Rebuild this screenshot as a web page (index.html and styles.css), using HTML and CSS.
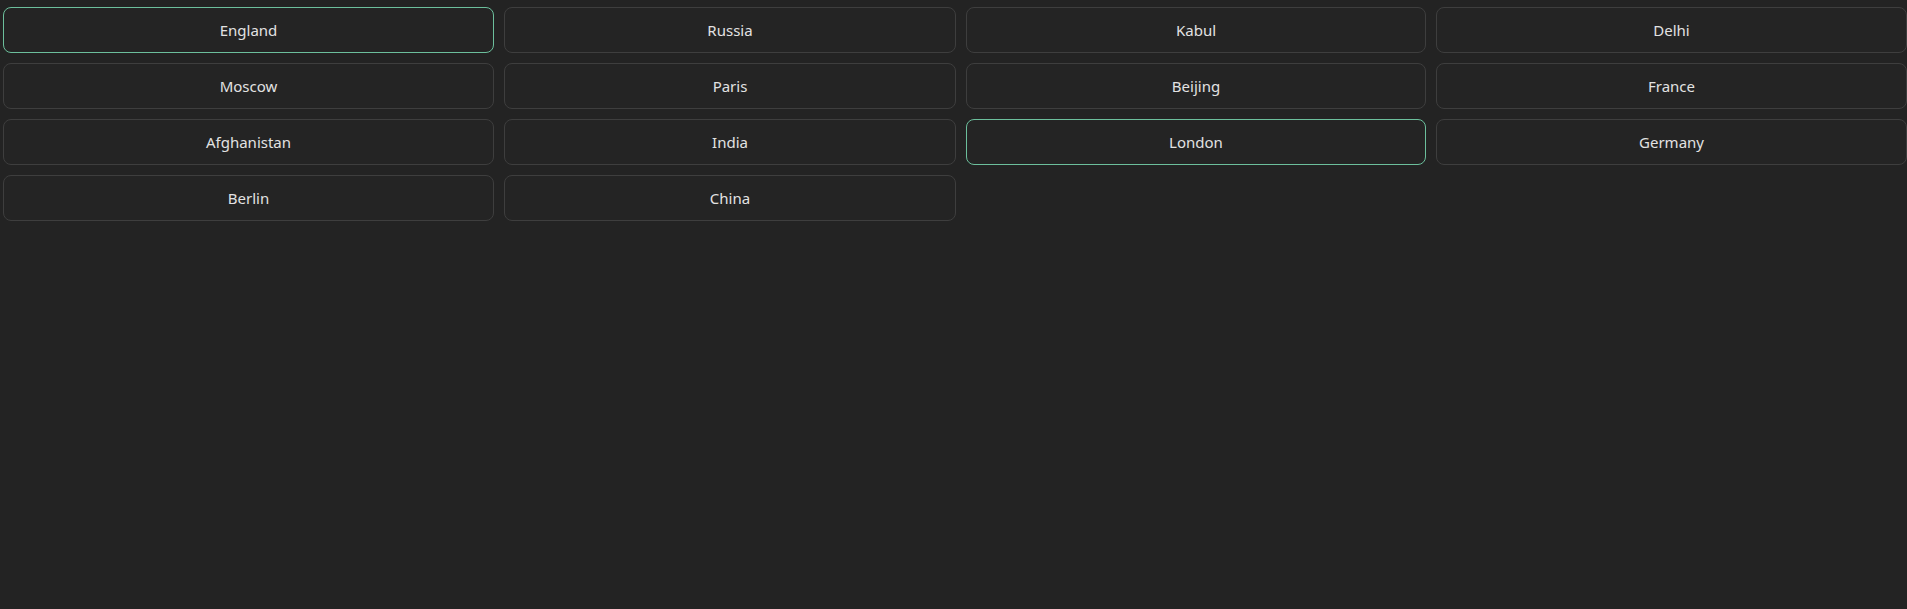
FILE: index.html
```html
<!DOCTYPE html>
<html lang="en">
<head>
<meta charset="utf-8">
<title>Match</title>
<link rel="stylesheet" href="styles.css">
</head>
<body>
<div class="grid">
  <button class="tile selected">England</button>
  <button class="tile">Russia</button>
  <button class="tile">Kabul</button>
  <button class="tile">Delhi</button>
  <button class="tile">Moscow</button>
  <button class="tile">Paris</button>
  <button class="tile">Beijing</button>
  <button class="tile">France</button>
  <button class="tile">Afghanistan</button>
  <button class="tile">India</button>
  <button class="tile selected">London</button>
  <button class="tile">Germany</button>
  <button class="tile">Berlin</button>
  <button class="tile">China</button>
</div>
</body>
</html>
```
FILE: styles.css
```css
html, body {
  margin: 0;
  padding: 0;
  background: #232323;
  height: 100%;
}
.grid {
  display: grid;
  grid-template-columns: 491fr 452fr 460fr 471fr;
  grid-auto-rows: 46px;
  gap: 10px;
  padding: 7px 0 0 3px;
}
.tile {
  box-sizing: border-box;
  background: #242424;
  border: 1px solid #3e3e3e;
  border-radius: 8px;
  color: #e2e2e2;
  font-family: "Noto Sans", "Open Sans", sans-serif;
  font-size: 15px;
  padding: 0;
  margin: 0;
  cursor: pointer;
}
.tile.selected {
  border-color: #6cbf9c;
}
```
